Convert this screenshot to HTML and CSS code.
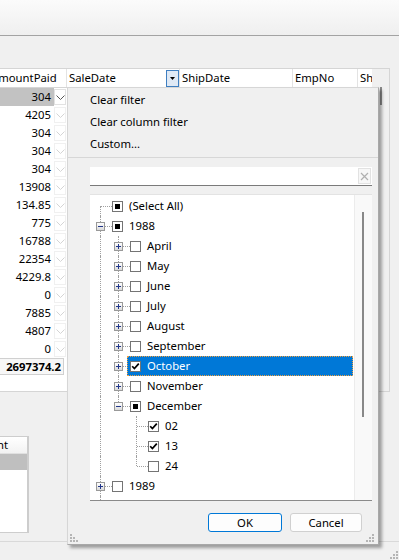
FILE: index.html
```html
<!DOCTYPE html>
<html lang="en">
<head>
  <meta charset="UTF-8" />
  <title>Grid filter</title>
  <meta name="viewport" content="width=device-width, initial-scale=1" />
  <link rel="stylesheet" href="styles.css">
</head>
<body>
  <div class="titlebar"></div>

  <div class="window">
    <div class="grid">
      <div class="grid-main">
        <div class="grid-head">
          <div class="hcell c1">AmountPaid</div>
          <div class="hcell c2">SaleDate
            <span class="filter-btn"><svg width="5" height="3" viewBox="0 0 5 3"><polygon points="0,0 5,0 2.5,3" fill="#000"/></svg></span>
          </div>
          <div class="hcell c3">ShipDate</div>
          <div class="hcell c4">EmpNo</div>
          <div class="hcell c5">ShipVIA</div>
        </div>
        <div class="grid-body">
          <div class="col1">
            <div class="row current"><span class="val">304</span><span class="drop"><svg width="9" height="5" viewBox="0 0 9 5"><polyline points="0.5,0.5 4.5,4.5 8.5,0.5" fill="none" stroke="currentColor"/></svg></span></div>
            <div class="row"><span class="val">4205</span><span class="drop"><svg width="9" height="5" viewBox="0 0 9 5"><polyline points="0.5,0.5 4.5,4.5 8.5,0.5" fill="none" stroke="currentColor"/></svg></span></div>
            <div class="row"><span class="val">304</span><span class="drop"><svg width="9" height="5" viewBox="0 0 9 5"><polyline points="0.5,0.5 4.5,4.5 8.5,0.5" fill="none" stroke="currentColor"/></svg></span></div>
            <div class="row"><span class="val">304</span><span class="drop"><svg width="9" height="5" viewBox="0 0 9 5"><polyline points="0.5,0.5 4.5,4.5 8.5,0.5" fill="none" stroke="currentColor"/></svg></span></div>
            <div class="row"><span class="val">304</span><span class="drop"><svg width="9" height="5" viewBox="0 0 9 5"><polyline points="0.5,0.5 4.5,4.5 8.5,0.5" fill="none" stroke="currentColor"/></svg></span></div>
            <div class="row"><span class="val">13908</span><span class="drop"><svg width="9" height="5" viewBox="0 0 9 5"><polyline points="0.5,0.5 4.5,4.5 8.5,0.5" fill="none" stroke="currentColor"/></svg></span></div>
            <div class="row"><span class="val">134.85</span><span class="drop"><svg width="9" height="5" viewBox="0 0 9 5"><polyline points="0.5,0.5 4.5,4.5 8.5,0.5" fill="none" stroke="currentColor"/></svg></span></div>
            <div class="row"><span class="val">775</span><span class="drop"><svg width="9" height="5" viewBox="0 0 9 5"><polyline points="0.5,0.5 4.5,4.5 8.5,0.5" fill="none" stroke="currentColor"/></svg></span></div>
            <div class="row"><span class="val">16788</span><span class="drop"><svg width="9" height="5" viewBox="0 0 9 5"><polyline points="0.5,0.5 4.5,4.5 8.5,0.5" fill="none" stroke="currentColor"/></svg></span></div>
            <div class="row"><span class="val">22354</span><span class="drop"><svg width="9" height="5" viewBox="0 0 9 5"><polyline points="0.5,0.5 4.5,4.5 8.5,0.5" fill="none" stroke="currentColor"/></svg></span></div>
            <div class="row"><span class="val">4229.8</span><span class="drop"><svg width="9" height="5" viewBox="0 0 9 5"><polyline points="0.5,0.5 4.5,4.5 8.5,0.5" fill="none" stroke="currentColor"/></svg></span></div>
            <div class="row"><span class="val">0</span><span class="drop"><svg width="9" height="5" viewBox="0 0 9 5"><polyline points="0.5,0.5 4.5,4.5 8.5,0.5" fill="none" stroke="currentColor"/></svg></span></div>
            <div class="row"><span class="val">7885</span><span class="drop"><svg width="9" height="5" viewBox="0 0 9 5"><polyline points="0.5,0.5 4.5,4.5 8.5,0.5" fill="none" stroke="currentColor"/></svg></span></div>
            <div class="row"><span class="val">4807</span><span class="drop"><svg width="9" height="5" viewBox="0 0 9 5"><polyline points="0.5,0.5 4.5,4.5 8.5,0.5" fill="none" stroke="currentColor"/></svg></span></div>
            <div class="row"><span class="val">0</span><span class="drop"><svg width="9" height="5" viewBox="0 0 9 5"><polyline points="0.5,0.5 4.5,4.5 8.5,0.5" fill="none" stroke="currentColor"/></svg></span></div>
            <div class="total">2697374.2</div>
          </div>
          <div class="rest"></div>
        </div>
      </div>
      <div class="grid-vscroll"><div class="thumb"></div></div>
    </div>

    <div class="lower">
      <div class="mini">
        <div class="mini-head"><span>Amount</span></div>
        <div class="mini-row sel"></div>
      </div>
    </div>

    <div class="statusbar">
      <svg class="grip" width="10" height="10" viewBox="0 0 10 10" fill="#b5b5b5">
        <rect x="7" y="1" width="2" height="2"/><rect x="4" y="4" width="2" height="2"/><rect x="7" y="4" width="2" height="2"/>
        <rect x="1" y="7" width="2" height="2"/><rect x="4" y="7" width="2" height="2"/><rect x="7" y="7" width="2" height="2"/>
      </svg>
    </div>

    <!-- filter dropdown of SaleDate -->
    <div class="popup">
      <div class="menu">
        <div class="menu-item">Clear filter</div>
        <div class="menu-item">Clear column filter</div>
        <div class="menu-item">Custom...</div>
      </div>
      <div class="sep"></div>

      <div class="search">
        <span class="clear-btn"><svg width="9" height="9" viewBox="0 0 9 9"><path d="M1 1 L8 8 M8 1 L1 8" stroke="#b0b0b0" stroke-width="1.2"/></svg></span>
      </div>

      <div class="tree">
        <div class="tree-list">
          <div class="node"><span class="elbow first"></span><span class="item"><span class="cb mixed"></span><span class="label">(Select All)</span></span></div>
          <div class="node"><span class="elbow"><span class="exp"></span></span><span class="item"><span class="cb mixed"></span><span class="label">1988</span></span></div>
          <div class="node"><span class="guide line"></span><span class="elbow"><span class="exp plus"></span></span><span class="item"><span class="cb"></span><span class="label">April</span></span></div>
          <div class="node"><span class="guide line"></span><span class="elbow"><span class="exp plus"></span></span><span class="item"><span class="cb"></span><span class="label">May</span></span></div>
          <div class="node"><span class="guide line"></span><span class="elbow"><span class="exp plus"></span></span><span class="item"><span class="cb"></span><span class="label">June</span></span></div>
          <div class="node"><span class="guide line"></span><span class="elbow"><span class="exp plus"></span></span><span class="item"><span class="cb"></span><span class="label">July</span></span></div>
          <div class="node"><span class="guide line"></span><span class="elbow"><span class="exp plus"></span></span><span class="item"><span class="cb"></span><span class="label">August</span></span></div>
          <div class="node"><span class="guide line"></span><span class="elbow"><span class="exp plus"></span></span><span class="item"><span class="cb"></span><span class="label">September</span></span></div>
          <div class="node"><span class="guide line"></span><span class="elbow"><span class="exp plus"></span></span><span class="item selected"><span class="cb checked"><svg width="9" height="9" viewBox="0 0 9 9"><path d="M1.2 4.2 L3.4 6.6 L7.8 1.6" fill="none" stroke="#000" stroke-width="1.7"/></svg></span><span class="label">October</span></span></div>
          <div class="node"><span class="guide line"></span><span class="elbow"><span class="exp plus"></span></span><span class="item"><span class="cb"></span><span class="label">November</span></span></div>
          <div class="node"><span class="guide line"></span><span class="elbow last"><span class="exp"></span></span><span class="item"><span class="cb mixed"></span><span class="label">December</span></span></div>
          <div class="node"><span class="guide line"></span><span class="guide"></span><span class="elbow"></span><span class="item"><span class="cb checked"><svg width="9" height="9" viewBox="0 0 9 9"><path d="M1.2 4.2 L3.4 6.6 L7.8 1.6" fill="none" stroke="#000" stroke-width="1.7"/></svg></span><span class="label">02</span></span></div>
          <div class="node"><span class="guide line"></span><span class="guide"></span><span class="elbow"></span><span class="item"><span class="cb checked"><svg width="9" height="9" viewBox="0 0 9 9"><path d="M1.2 4.2 L3.4 6.6 L7.8 1.6" fill="none" stroke="#000" stroke-width="1.7"/></svg></span><span class="label">13</span></span></div>
          <div class="node"><span class="guide line"></span><span class="guide"></span><span class="elbow last"></span><span class="item"><span class="cb"></span><span class="label">24</span></span></div>
          <div class="node"><span class="elbow"><span class="exp plus"></span></span><span class="item"><span class="cb"></span><span class="label">1989</span></span></div>
          <div class="node"><span class="elbow"><span class="exp plus"></span></span><span class="item"><span class="cb"></span><span class="label">1990</span></span></div>
        </div>
        <div class="tree-vscroll"><div class="thumb"></div></div>
      </div>

      <div class="buttons">
        <button class="btn default">OK</button>
        <button class="btn">Cancel</button>
      </div>

      <div class="popup-foot">
        <svg width="9" height="9" viewBox="0 0 9 9" fill="#b5b5b5">
          <rect x="0" y="0" width="2" height="2"/><rect x="0" y="3" width="2" height="2"/><rect x="3" y="3" width="2" height="2"/>
          <rect x="0" y="6" width="2" height="2"/><rect x="3" y="6" width="2" height="2"/><rect x="6" y="6" width="2" height="2"/>
        </svg>
        <svg width="9" height="9" viewBox="0 0 9 9" fill="#b5b5b5">
          <rect x="6" y="0" width="2" height="2"/><rect x="3" y="3" width="2" height="2"/><rect x="6" y="3" width="2" height="2"/>
          <rect x="0" y="6" width="2" height="2"/><rect x="3" y="6" width="2" height="2"/><rect x="6" y="6" width="2" height="2"/>
        </svg>
      </div>
    </div>
  </div>
</body>
</html>
```

FILE: styles.css
```css
body {
  margin: 0;
  width: 399px;
  height: 560px;
  overflow: hidden;
  background: #f0f0f0;
  color: #000;
  font-family: 'Noto Sans', 'Open Sans', sans-serif;
  font-size: 11.3px;
}
.titlebar {
  height: 35px;
  background: linear-gradient(#fbfbfb, #efefef);
  border-bottom: 1px solid #a3a3a3;
}
.window {
  position: relative;
  padding-top: 32px;
}

/* main grid */
.grid {
  margin-left: -12px;
  width: 402px;
  height: 324px;
  box-sizing: border-box;
  border: 1px solid #d5d5d5;
  display: flex;
  background: #f0f0f0;
}
.grid-main {
  flex: 1;
  overflow: hidden;
  display: flex;
  flex-direction: column;
}
.grid-head {
  display: flex;
  height: 18px;
  background: #fff;
  border-bottom: 1px solid #d5d5d5;
}
.hcell {
  box-sizing: border-box;
  border-right: 1px solid #e3e3e3;
  padding-left: 2px;
  line-height: 18px;
  white-space: nowrap;
  overflow: hidden;
  display: flex;
  align-items: center;
}
.c1 { width: 78px; }
.c2 { width: 113px; justify-content: space-between; }
.c3 { width: 113px; }
.c4 { width: 65px; }
.c5 { flex: 1; border-right: none; }
.filter-btn {
  width: 13px;
  height: 17px;
  box-sizing: border-box;
  border: 1px solid #3f7fc1;
  background: #dfe9f5;
  display: flex;
  align-items: center;
  justify-content: center;
}
.grid-body {
  flex: 1;
  display: flex;
}
.col1 {
  width: 78px;
  background: #fff;
}
.row {
  display: flex;
  height: 18px;
}
.val {
  width: 65px;
  box-sizing: border-box;
  padding-right: 3px;
  text-align: right;
  line-height: 18px;
}
.drop {
  width: 12px;
  margin: 1px 0;
  box-sizing: border-box;
  border: 1px solid #f0f0f0;
  color: #d4d4d4;
  display: flex;
  align-items: center;
  justify-content: center;
}
.row.current .val { background: #c2c2c2; }
.row.current .drop { color: #555; border-color: #e2e2e2; }
.total {
  width: 75px;
  height: 17px;
  box-sizing: border-box;
  background: #f7f7f7;
  border: 1px solid #d0d0d0;
  border-left: none;
  padding-right: 2px;
  text-align: right;
  line-height: 15px;
  font-weight: 700;
}
.rest {
  flex: 1;
  background: #fff;
}
.grid-vscroll {
  width: 17px;
  padding-top: 18px;
  background: #f0f0f0;
}
.grid-vscroll .thumb {
  width: 2px;
  height: 18px;
  margin-left: 8px;
  background: #8a8a8a;
}

/* lower panel */
.lower {
  height: 149px;
  padding-top: 44px;
  box-sizing: border-box;
  height: 150px;
  border-bottom: 1px solid #d9d9d9;
}
.mini {
  width: 29px;
  height: 97px;
  box-sizing: border-box;
  border: 1px solid #cdcdcd;
  border-left: none;
  border-right-width: 2px;
  background: #fff;
}
.mini-head {
  height: 16px;
  display: flex;
  justify-content: flex-end;
  overflow: hidden;
  background: linear-gradient(#fff, #f2f2f2);
  border-bottom: 1px solid #e0e0e0;
  line-height: 16px;
  padding-right: 19px;
}
.mini-row { height: 16px; }
.mini-row.sel { background: #bfbfbf; }
.statusbar {
  height: 18px;
  display: flex;
  justify-content: flex-end;
  align-items: flex-end;
}

/* filter popup */
.popup {
  position: absolute;
  left: 67px;
  top: 51px;
  width: 312px;
  height: 458px;
  box-sizing: border-box;
  border: 1px solid #d6d6d6;
  border-right-color: #a8a8a8;
  border-bottom-color: #a8a8a8;
  background: #f0f0f0;
  box-shadow: 3px 3px 3px rgba(0,0,0,0.35);
  display: flex;
  flex-direction: column;
}
.menu { padding-top: 1px; }
.menu-item {
  height: 22px;
  line-height: 22px;
  padding-left: 22px;
}
.sep {
  margin-top: 2px;
  border-top: 1px solid #d7d7d7;
}
.search {
  margin: 9px 6px 0 22px;
  height: 19px;
  box-sizing: border-box;
  background: #fff;
  border-bottom: 1px solid #7a7a7a;
  display: flex;
  justify-content: flex-end;
  padding: 1px 1px 0 0;
}
.clear-btn {
  width: 13px;
  height: 16px;
  box-sizing: border-box;
  border: 1px solid #e2e2e2;
  background: #f7f7f7;
  display: flex;
  align-items: center;
  justify-content: center;
}
.tree {
  margin: 8px 6px 0 22px;
  height: 307px;
  box-sizing: border-box;
  background: #fff;
  border-top: 1px solid #e3e3e3;
  border-bottom: 1px solid #8a8a8a;
  display: flex;
  overflow: hidden;
}
.tree-list {
  flex: 1;
  padding: 1px 0 0 1px;
  overflow: hidden;
}
.tree-vscroll {
  width: 18px;
  box-sizing: border-box;
  border-left: 1px solid #ececec;
  background: #f9f9f9;
  padding-top: 17px;
}
.tree-vscroll .thumb {
  width: 2px;
  height: 205px;
  margin-left: 7px;
  background: #888;
}
.node {
  display: flex;
  height: 20px;
}
.guide, .elbow {
  width: 18px;
  flex: none;
  position: relative;
}
.guide.line::before, .elbow::before {
  content: "";
  position: absolute;
  left: 9px;
  top: 0;
  bottom: 0;
  border-left: 1px dotted #a0a0a0;
}
.elbow.first::before { top: 10px; }
.elbow.last::before { bottom: 10px; }
.elbow::after {
  content: "";
  position: absolute;
  left: 10px;
  right: -3px;
  top: 10px;
  border-top: 1px dotted #a0a0a0;
}
.exp {
  position: relative;
  z-index: 1;
  display: block;
  width: 9px;
  height: 9px;
  box-sizing: border-box;
  margin: 6px 0 0 5px;
  border: 1px solid #999;
  background: linear-gradient(#fff, #dadada);
}
.exp::before {
  content: "";
  position: absolute;
  left: 1px;
  top: 3px;
  width: 5px;
  height: 1px;
  background: #22378a;
}
.exp.plus::after {
  content: "";
  position: absolute;
  left: 3px;
  top: 1px;
  width: 1px;
  height: 5px;
  background: #22378a;
}
.item {
  flex: 1;
  display: flex;
  margin-right: 1px;
  padding-left: 3px;
  position: relative;
  z-index: 1;
}
.cb {
  width: 11px;
  height: 11px;
  box-sizing: border-box;
  margin-top: 5px;
  border: 1px solid #747474;
  background: #fff;
  display: flex;
  align-items: center;
  justify-content: center;
}
.cb.mixed::before {
  content: "";
  width: 5px;
  height: 5px;
  background: #000;
}
.label {
  margin-left: 6px;
  line-height: 20px;
  white-space: nowrap;
}
.item.selected {
  background: #0078d7;
  outline: 1px dotted #f0a040;
  outline-offset: -1px;
  color: #fff;
}
.buttons {
  display: flex;
  justify-content: flex-end;
  gap: 8px;
  margin-top: 12px;
  padding-right: 16px;
}
.btn {
  height: 19px;
  padding: 0;
  box-sizing: border-box;
  border: 1px solid #d0d0d0;
  border-radius: 3px;
  background: #fdfdfd;
  font: inherit;
  color: #000;
  width: 72px;
  line-height: 16px;
}
.btn.default {
  width: 74px;
  border-color: #0078d7;
}
.popup-foot {
  margin-top: auto;
  display: flex;
  justify-content: space-between;
  padding: 0 3px 1px 2px;
  height: 9px;
}
```
